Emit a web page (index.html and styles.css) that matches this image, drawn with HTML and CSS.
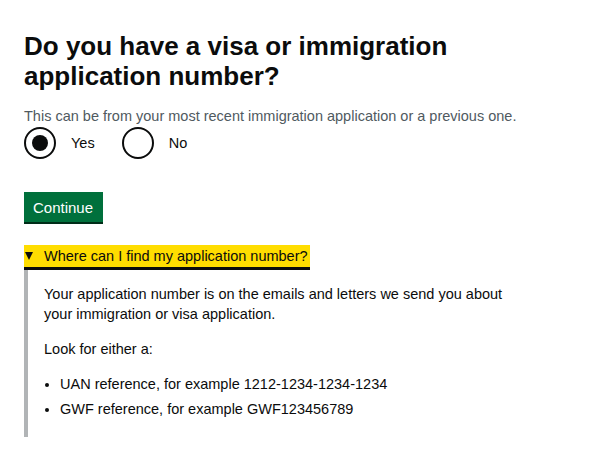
FILE: index.html
```html
<!DOCTYPE html>
<html lang="en">
<head>
<meta charset="utf-8">
<title>Visa or immigration application number</title>
<link rel="stylesheet" href="styles.css">
</head>
<body>
<main class="page">
  <h1 class="heading">Do you have a visa or immigration application number?</h1>
  <p class="hint">This can be from your most recent immigration application or a previous one.</p>
  <div class="radios">
    <label class="radio"><span class="radio-circle radio-circle--checked"></span><span class="radio-label">Yes</span></label>
    <label class="radio"><span class="radio-circle"></span><span class="radio-label">No</span></label>
  </div>
  <button class="button" type="button">Continue</button>
  <div class="details">
    <div class="summary"><span class="summary-arrow"></span><span class="summary-text">Where can I find my application number?</span></div>
    <div class="details-text">
      <p class="body">Your application number is on the emails and letters we send you about your immigration or visa application.</p>
      <p class="body">Look for either a:</p>
      <ul class="list">
        <li>UAN reference, for example 1212-1234-1234-1234</li>
        <li>GWF reference, for example GWF123456789</li>
      </ul>
    </div>
  </div>
</main>
</body>
</html>
```

FILE: styles.css
```css
html, body {
  margin: 0;
  padding: 0;
  background: #ffffff;
}
body {
  font-family: "Liberation Sans", Arial, sans-serif;
  color: #0b0c0c;
}
.page {
  padding: 31px 24px 0 24px;
}
.heading {
  margin: 0 0 15px 0;
  font-size: 26px;
  line-height: 30px;
  font-weight: 700;
  width: 460px;
}
.hint {
  margin: 0 0 1px 0;
  font-size: 14.5px;
  line-height: 20px;
  color: #505a5f;
}
.radios {
  display: flex;
  align-items: center;
  gap: 27px;
}
.radio {
  display: flex;
  align-items: center;
  gap: 15px;
  font-size: 14.5px;
  line-height: 20px;
}
.radio-circle {
  box-sizing: border-box;
  width: 32px;
  height: 32px;
  border: 2px solid #0b0c0c;
  border-radius: 50%;
  display: flex;
  align-items: center;
  justify-content: center;
  background: #fff;
}
.radio-circle--checked::after {
  content: "";
  width: 16px;
  height: 16px;
  border-radius: 50%;
  background: #0b0c0c;
}
.button {
  display: block;
  margin: 33px 0 23px 0;
  padding: 6px 8px 5px 7px;
  border: 2px solid transparent;
  background: #00703c;
  color: #ffffff;
  font-family: inherit;
  font-size: 15px;
  line-height: 15px;
  box-shadow: 0 2px 0 #002d18;
  border-radius: 0;
}
.details {
  font-size: 14.5px;
  line-height: 20px;
}
.summary {
  display: inline-flex;
  align-items: center;
  height: 22px;
  background: #ffdd00;
  box-shadow: 0 3px 0 #0b0c0c;
  padding-right: 2px;
}
.summary-arrow {
  width: 0;
  height: 0;
  border-left: 4.5px solid transparent;
  border-right: 4.5px solid transparent;
  border-top: 8px solid #0b0c0c;
  margin: 0 11px 0 1px;
}
.details-text {
  margin-top: 3px;
  border-left: 4px solid #b1b4b6;
  padding: 14px 0 13px 16px;
}
.body {
  margin: 0 0 15px 0;
  width: 475px;
}
.list {
  margin: 0;
  padding-left: 16px;
}
.list li {
  margin-bottom: 5px;
}
```
